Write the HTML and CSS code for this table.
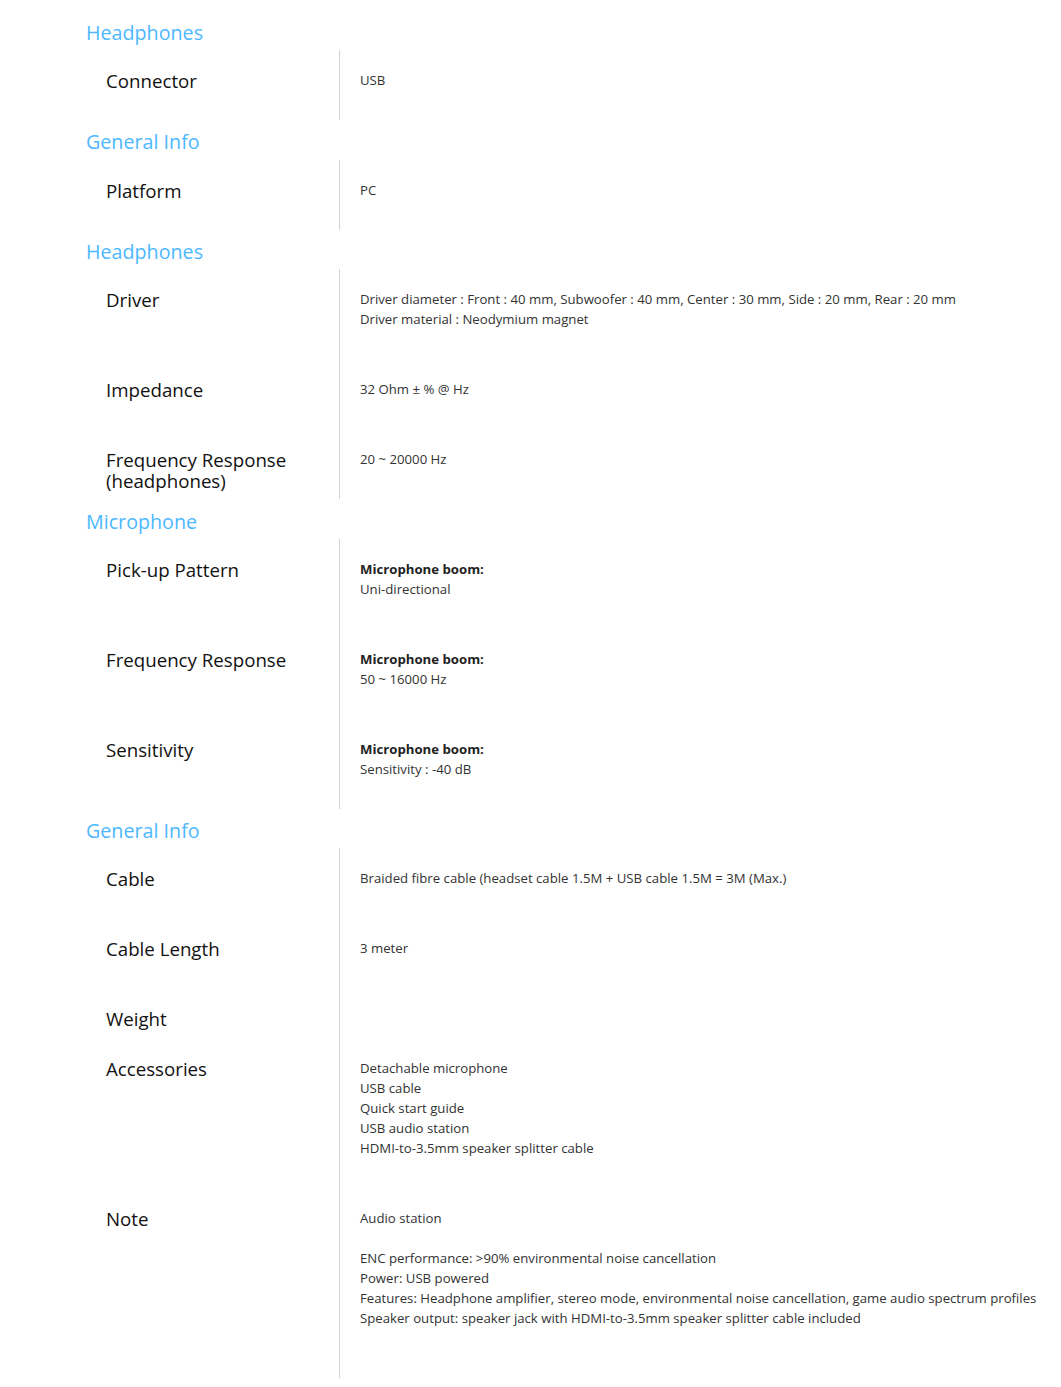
FILE: index.html
```html
<!DOCTYPE html>
<html lang="en">
  <head>
    <meta charset="UTF-8" />
    <meta name="viewport" content="width=device-width, initial-scale=1" />
    <title>Specifications</title>
    <link rel="stylesheet" href="styles.css">
  </head>

  <body>
    <div class="specContainer">
      <!-- headphones -->
      <h2 class="specGroup">Headphones</h2>
      <div class="specRow">
        <div class="specLabel">Connector</div>
        <div class="specValue">USB</div>
      </div>

      <!-- general info -->
      <h2 class="specGroup">General Info</h2>
      <div class="specRow">
        <div class="specLabel">Platform</div>
        <div class="specValue">PC</div>
      </div>

      <!-- headphones -->
      <h2 class="specGroup">Headphones</h2>
      <div class="specRow">
        <div class="specLabel">Driver</div>
        <div class="specValue">
          Driver diameter : Front : 40 mm, Subwoofer : 40 mm, Center : 30 mm, Side : 20 mm, Rear : 20 mm<br />
          Driver material : Neodymium magnet
        </div>
      </div>
      <div class="specRow">
        <div class="specLabel">Impedance</div>
        <div class="specValue">32 Ohm ± % @ Hz</div>
      </div>
      <div class="specRow">
        <div class="specLabel">Frequency Response (headphones)</div>
        <div class="specValue">20 ~ 20000 Hz</div>
      </div>

      <!-- microphone -->
      <h2 class="specGroup">Microphone</h2>
      <div class="specRow">
        <div class="specLabel">Pick-up Pattern</div>
        <div class="specValue">
          <b>Microphone boom:</b><br />
          Uni-directional
        </div>
      </div>
      <div class="specRow">
        <div class="specLabel">Frequency Response</div>
        <div class="specValue">
          <b>Microphone boom:</b><br />
          50 ~ 16000 Hz
        </div>
      </div>
      <div class="specRow">
        <div class="specLabel">Sensitivity</div>
        <div class="specValue">
          <b>Microphone boom:</b><br />
          Sensitivity : -40 dB
        </div>
      </div>

      <!-- general info -->
      <h2 class="specGroup">General Info</h2>
      <div class="specRow">
        <div class="specLabel">Cable</div>
        <div class="specValue">Braided fibre cable (headset cable 1.5M + USB cable 1.5M = 3M (Max.)</div>
      </div>
      <div class="specRow">
        <div class="specLabel">Cable Length</div>
        <div class="specValue">3 meter</div>
      </div>
      <div class="specRow">
        <div class="specLabel">Weight</div>
        <div class="specValue"></div>
      </div>
      <div class="specRow">
        <div class="specLabel">Accessories</div>
        <div class="specValue">
          Detachable microphone<br />
          USB cable<br />
          Quick start guide<br />
          USB audio station<br />
          HDMI-to-3.5mm speaker splitter cable
        </div>
      </div>
      <div class="specRow">
        <div class="specLabel">Note</div>
        <div class="specValue specValueLast">
          Audio station<br />
          <br />
          ENC performance: &gt;90% environmental noise cancellation<br />
          Power: USB powered<br />
          Features: Headphone amplifier, stereo mode, environmental noise cancellation, game audio spectrum profiles<br />
          Speaker output: speaker jack with HDMI-to-3.5mm speaker splitter cable included
        </div>
      </div>
    </div>
  </body>
</html>
```

FILE: styles.css
```css
*,
*:before,
*:after {
  margin: 0;
  padding: 0;
  box-sizing: border-box;
}

body {
  font-family: "Open Sans", "Noto Sans", sans-serif;
  background-color: #fff;
  color: #111;
}

.specContainer {
  padding: 10.4px 0 0 86px;
}

.specGroup {
  height: 39.6px;
  padding-top: 9.4px;
  font-size: 19.7px;
  line-height: 26px;
  font-weight: 400;
  color: #4db8ff;
}

.specRow {
  display: grid;
  grid-template-columns: 253px 1fr;
}

.specLabel {
  padding: 20px 0 0 20px;
  font-size: 18.7px;
  line-height: 21px;
  color: #111;
}

.specValue {
  padding: 20px 0 30px 20px;
  border-left: 1px solid #d2d2d2;
  font-size: 13.2px;
  line-height: 20px;
  color: #333;
}

.specValue b {
  font-weight: 700;
  color: #222;
}

.specValueLast {
  padding-bottom: 50px;
}
```
